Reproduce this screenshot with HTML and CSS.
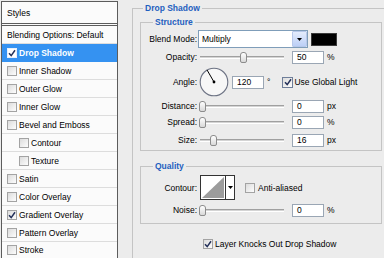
FILE: index.html
```html
<!DOCTYPE html>
<html>
<head>
<meta charset="utf-8">
<title>Layer Style</title>
<link rel="stylesheet" href="styles.css">
</head>
<body>
<div class="dialog">
  <aside class="styles-panel">
    <div class="panel-head">Styles</div>
    <div class="row">Blending Options: Default</div>
    <div class="row selected"><span class="cb on"><svg viewBox="0 0 8 8"><path d="M1 4.2 L3.2 6.6 L7 1.2"/></svg></span>Drop Shadow</div>
    <div class="row"><span class="cb"></span>Inner Shadow</div>
    <div class="row"><span class="cb"></span>Outer Glow</div>
    <div class="row"><span class="cb"></span>Inner Glow</div>
    <div class="row"><span class="cb"></span>Bevel and Emboss</div>
    <div class="row sub"><span class="cb"></span>Contour</div>
    <div class="row sub"><span class="cb"></span>Texture</div>
    <div class="row"><span class="cb"></span>Satin</div>
    <div class="row"><span class="cb"></span>Color Overlay</div>
    <div class="row"><span class="cb on"><svg viewBox="0 0 8 8"><path d="M1 4.2 L3.2 6.6 L7 1.2"/></svg></span>Gradient Overlay</div>
    <div class="row"><span class="cb"></span>Pattern Overlay</div>
    <div class="row last"><span class="cb"></span>Stroke</div>
  </aside>

  <main class="settings">
    <fieldset class="group outer">
      <legend>Drop Shadow</legend>

      <fieldset class="group inner structure">
        <legend>Structure</legend>
        <div class="frow r-blend">
          <span class="lbl">Blend Mode:</span>
          <span class="select"><span class="sel-text">Multiply</span><span class="sel-btn"><svg viewBox="0 0 5 3"><path d="M0 0 H5 L2.5 3 Z"/></svg></span></span>
          <span class="swatch"></span>
        </div>
        <div class="frow r-op">
          <span class="lbl">Opacity:</span>
          <span class="slider"><span class="thumb" style="left:51%"></span></span>
          <span class="num">50</span><span class="unit">%</span>
        </div>
        <div class="frow r-angle">
          <span class="lbl">Angle:</span>
          <svg class="dial" viewBox="0 0 30 30"><circle cx="15" cy="15" r="13.8"/><line x1="15" y1="15" x2="8" y2="2.9"/><circle class="dot" cx="15" cy="15" r="1.4"/></svg>
          <span class="num angle-num">120</span><span class="unit">°</span>
          <span class="cb global on"><svg viewBox="0 0 8 8"><path d="M1 4.2 L3.2 6.6 L7 1.2"/></svg></span><span>Use Global Light</span>
        </div>
        <div class="frow r-dist">
          <span class="lbl">Distance:</span>
          <span class="slider"><span class="thumb" style="left:2%"></span></span>
          <span class="num">0</span><span class="unit">px</span>
        </div>
        <div class="frow r-spread">
          <span class="lbl">Spread:</span>
          <span class="slider"><span class="thumb" style="left:2%"></span></span>
          <span class="num">0</span><span class="unit">%</span>
        </div>
        <div class="frow r-size">
          <span class="lbl">Size:</span>
          <span class="slider"><span class="thumb" style="left:15%"></span></span>
          <span class="num">16</span><span class="unit">px</span>
        </div>
      </fieldset>

      <fieldset class="group inner quality">
        <legend>Quality</legend>
        <div class="frow r-contour">
          <span class="lbl">Contour:</span>
          <span class="contour">
            <svg class="curve" viewBox="0 0 24 23"><path d="M1 22 L23 1 V22 Z"/></svg>
            <span class="c-arrow"><svg viewBox="0 0 5 3"><path d="M0 0 H5 L2.5 3 Z"/></svg></span>
          </span>
          <span class="cb anti"></span><span>Anti-aliased</span>
        </div>
        <div class="frow r-noise">
          <span class="lbl">Noise:</span>
          <span class="slider"><span class="thumb" style="left:2%"></span></span>
          <span class="num">0</span><span class="unit">%</span>
        </div>
      </fieldset>

      <div class="frow knock">
        <span class="cb on"><svg viewBox="0 0 8 8"><path d="M1 4.2 L3.2 6.6 L7 1.2"/></svg></span><span>Layer Knocks Out Drop Shadow</span>
      </div>
    </fieldset>
  </main>
</div>
</body>
</html>
```

FILE: styles.css
```css
* { box-sizing: border-box; }

html, body {
  margin: 0;
  padding: 0;
}

body {
  width: 384px;
  height: 258px;
  overflow: hidden;
  background: #ececec;
  font-family: "Liberation Sans", Arial, sans-serif;
  font-size: 8.5px;
  color: #000;
}

.dialog {
  display: flex;
  align-items: flex-start;
  height: 258px;
}

/* ---------- left styles list ---------- */
.styles-panel {
  flex: none;
  width: 117px;
  height: 257px;
  margin: 1px 0 0 1px;
  border: 1px solid #5c5c5c;
  border-bottom: none;
  background: #fbfbfb;
  overflow: hidden;
}

.panel-head {
  height: 24px;
  padding: 3px 0 0 5px;
  line-height: 16px;
  border-bottom: 3px double #5c5c5c;
}

.row {
  display: flex;
  align-items: center;
  height: 18px;
  padding-left: 5px;
  border-bottom: 1px solid #dddddd;
  white-space: nowrap;
}

.row.last {
  height: 16px;
  border-bottom: none;
}

.row.sub { padding-left: 17px; }

.row.selected {
  background: #3592f1;
  border-bottom-color: #3592f1;
  color: #fff;
  font-weight: bold;
}

/* ---------- checkboxes ---------- */
.cb {
  flex: none;
  display: inline-flex;
  align-items: center;
  justify-content: center;
  width: 10px;
  height: 10px;
  margin-right: 2px;
  border: 1px solid #a3a3a3;
  background: linear-gradient(135deg, #dcdcdc, #fdfdfd);
}

.cb svg {
  width: 8px;
  height: 8px;
  display: block;
}

.cb svg path {
  fill: none;
  stroke: #24315a;
  stroke-width: 1.5;
}

.selected .cb {
  border-color: #e8f0fb;
  background: #fff;
}

/* ---------- right settings ---------- */
.settings {
  flex: 1;
  min-width: 0;
  height: 258px;
  padding-top: 1px;
  overflow: hidden;
}

fieldset {
  min-width: 0;
  margin: 0;
  padding: 0;
  border: 1px solid #c4c4c4;
}

legend {
  padding: 0 2px;
  line-height: 14px;
  font-weight: bold;
  color: #1f5fbf;
}

.outer {
  height: 257px;
  margin: 0 -7px 0 14px;
  padding: 0 8px 0 7px;
  border-bottom-width: 0;
}

.outer > legend { margin-left: 3px; }

.inner > legend { margin-left: 12px; }

.structure { padding-bottom: 3px; }

.quality {
  margin-top: 8px;
  padding-bottom: 6px;
}

.frow {
  display: flex;
  align-items: center;
  white-space: nowrap;
}

.lbl {
  flex: none;
  width: 56px;
  text-align: right;
}

.r-blend  { height: 18px; margin-top: 1px; }
.r-op     { height: 14px; margin-top: 2px; }
.r-angle  { height: 32px; margin-top: 2px; }
.r-dist   { height: 14px; margin-top: 1px; }
.r-spread { height: 14px; margin-top: 2px; }
.r-size   { height: 14px; margin-top: 4px; }
.r-contour { height: 25px; margin-top: 2px; }
.r-noise  { height: 14px; margin-top: 3px; }

.knock {
  height: 14px;
  margin-top: 13px;
  padding-left: 63px;
}

/* select */
.select {
  display: flex;
  align-items: center;
  width: 110px;
  height: 18px;
  margin-left: 1px;
  border: 1px solid #7f9db9;
  background: #fff;
}

.sel-text {
  flex: 1;
  padding-left: 3px;
}

.sel-btn {
  display: flex;
  align-items: center;
  justify-content: center;
  width: 15px;
  height: 16px;
  border: 1px solid #b7c8ea;
  border-radius: 1px;
  background: linear-gradient(#e4ecfc, #bccff6);
}

.sel-btn svg, .c-arrow svg {
  width: 5px;
  height: 3px;
  display: block;
}

.swatch {
  width: 26px;
  height: 13px;
  margin-left: 3px;
  background: #000;
  border: 1px solid #3a3a3a;
}

/* slider */
.slider {
  position: relative;
  width: 84px;
  height: 3px;
  margin-left: 3px;
  border-top: 1px solid #a0a0a0;
  border-bottom: 1px solid #ffffff;
  background: #d4d4d4;
}

.thumb {
  position: absolute;
  top: -5px;
  width: 7px;
  height: 11px;
  margin-left: -3px;
  border: 1px solid #8c8c8c;
  border-radius: 3px 3px 2px 2px;
  background: linear-gradient(#ffffff, #d8d8d8);
}

/* numeric box */
.num {
  flex: none;
  width: 32px;
  height: 13px;
  margin-left: 8px;
  padding-left: 4px;
  line-height: 11px;
  border: 1px solid #9aa6b4;
  background: #fff;
}

.unit { margin-left: 3px; }

/* angle */
.dial {
  flex: none;
  width: 30px;
  height: 30px;
  margin-left: 2px;
}

.dial circle {
  fill: #f7f7f7;
  stroke: #6d7384;
  stroke-width: 1.1;
}

.dial line {
  stroke: #000;
  stroke-width: 1;
}

.dial .dot {
  fill: #000;
  stroke: none;
}

.angle-num { margin-left: 3px; }

.cb.global {
  width: 11px;
  height: 11px;
  margin-left: 12px;
  margin-right: 1px;
  border-color: #6f7e99;
}

/* contour picker */
.contour {
  display: flex;
  width: 35px;
  height: 25px;
  margin-left: 3px;
  border: 1px solid #333;
  background: #fff;
}

.curve {
  display: block;
  width: 24px;
  height: 23px;
}

.curve path {
  fill: #9c9c9c;
}

.c-arrow {
  flex: 1;
  display: flex;
  align-items: center;
  justify-content: center;
  border-left: 1px solid #333;
}

.cb.anti {
  margin-left: 10px;
  margin-right: 3px;
}
```
